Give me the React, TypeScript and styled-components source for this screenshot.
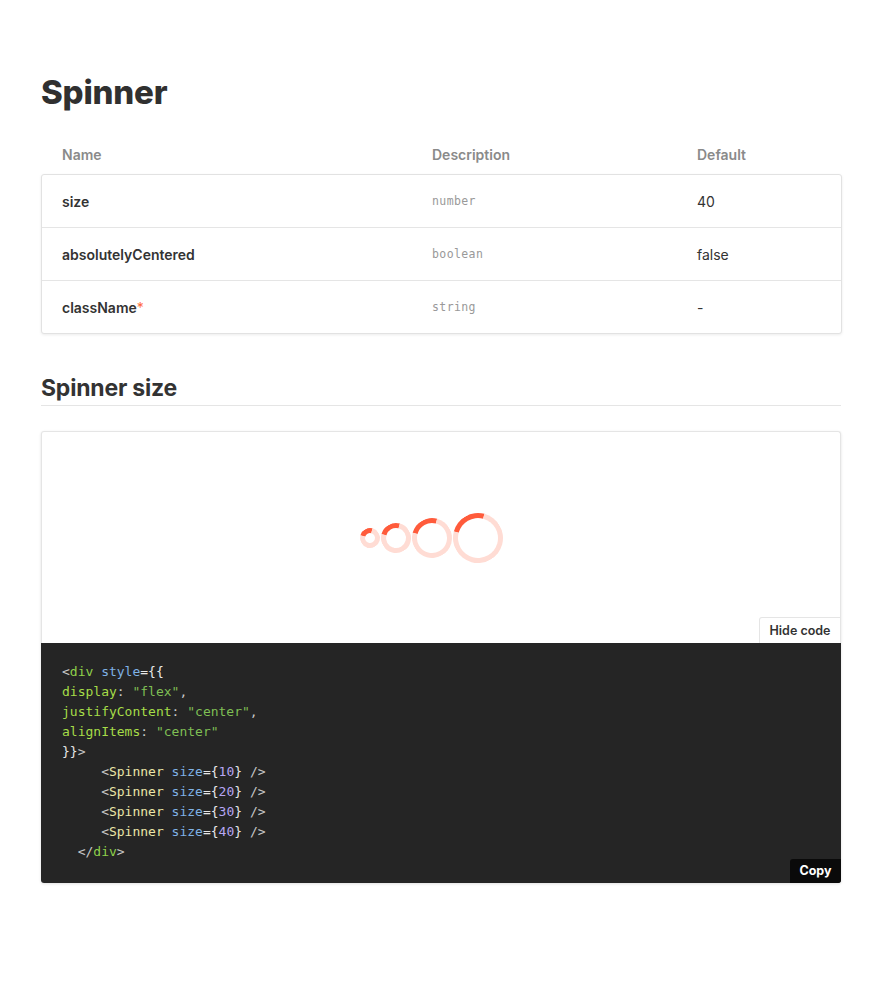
import React from 'react';
import styled, { createGlobalStyle } from 'styled-components';

const GlobalStyle = createGlobalStyle`
  html, body {
    margin: 0;
    padding: 0;
    background: #ffffff;
  }
  body {
    font-family: Inter, "Noto Sans", "Liberation Sans", sans-serif;
    color: #333333;
  }
`;

interface PropRow {
  name: string;
  type: string;
  def: string;
  required?: boolean;
}

const rows: PropRow[] = [
  { name: 'size', type: 'number', def: '40' },
  { name: 'absolutelyCentered', type: 'boolean', def: 'false' },
  { name: 'className', type: 'string', def: '-', required: true },
];

const spinnerSizes = [10, 20, 30, 40];

const App: React.FC = () => {
  return (
    <>
      <GlobalStyle />
      <Page>
        <Title>Spinner</Title>

        <PropsTable>
          <HeaderRow>
            <HeaderCell>Name</HeaderCell>
            <HeaderCell>Description</HeaderCell>
            <HeaderCell>Default</HeaderCell>
          </HeaderRow>
          <TableCard>
            {rows.map((row) => (
              <Row key={row.name}>
                <NameCell>
                  {row.name}
                  {row.required && <Required>*</Required>}
                </NameCell>
                <TypeCell>{row.type}</TypeCell>
                <DefaultCell>{row.def}</DefaultCell>
              </Row>
            ))}
          </TableCard>
        </PropsTable>

        <SectionTitle>Spinner size</SectionTitle>

        <Demo>
          <Preview>
            <SpinnerRow>
              {spinnerSizes.map((s) => (
                <Spinner key={s} $size={s} />
              ))}
            </SpinnerRow>
            <HideCodeTab>Hide code</HideCodeTab>
          </Preview>
          <CodeBlock>
            <Line>
              <P>&lt;</P><Tag>div</Tag> <Attr>style</Attr><W>={'{{'}</W>
            </Line>
            <Line>
              <Key>display</Key><P>: </P><Str>"flex"</Str><P>,</P>
            </Line>
            <Line>
              <Key>justifyContent</Key><P>: </P><Str>"center"</Str><P>,</P>
            </Line>
            <Line>
              <Key>alignItems</Key><P>: </P><Str>"center"</Str>
            </Line>
            <Line>
              <W>{'}}'}</W><P>&gt;</P>
            </Line>
            {spinnerSizes.map((s) => (
              <Line key={s}>
                {'     '}<P>&lt;</P><Comp>Spinner</Comp> <Attr>size</Attr><W>={'{'}</W><Num>{s}</Num><W>{'}'}</W> <P>/&gt;</P>
              </Line>
            ))}
            <Line>
              {'  '}<P>&lt;/</P><Tag>div</Tag><P>&gt;</P>
            </Line>
            <CopyButton>Copy</CopyButton>
          </CodeBlock>
        </Demo>
      </Page>
    </>
  );
};

const Page = styled.div`
  padding: 70px 40px 117px 41px;
`;

const Title = styled.h1`
  font-size: 33px;
  font-weight: 800;
  line-height: 44px;
  margin: 0 0 20px;
  color: #303030;
  letter-spacing: -0.2px;
`;

const PropsTable = styled.div`
  width: 801px;
`;

const columns = `370px 265px 1fr`;

const HeaderRow = styled.div`
  display: grid;
  grid-template-columns: ${columns};
  padding: 0 21px;
  height: 40px;
  align-items: center;
`;

const HeaderCell = styled.div`
  font-size: 14px;
  font-weight: 600;
  color: #8a8a8a;
`;

const TableCard = styled.div`
  border: 1px solid #e2e2e2;
  border-radius: 3px;
  box-shadow: 0 1px 3px rgba(0, 0, 0, 0.08);
  background: #ffffff;
`;

const Row = styled.div`
  display: grid;
  grid-template-columns: ${columns};
  padding: 0 20px;
  height: 52px;
  align-items: center;
  & + & {
    border-top: 1px solid #e5e5e5;
  }
`;

const NameCell = styled.div`
  font-size: 14px;
  font-weight: 600;
  color: #333333;
`;

const Required = styled.span`
  color: #ff6a3d;
  font-weight: 400;
`;

const TypeCell = styled.div`
  font-family: "DejaVu Sans Mono", "Liberation Mono", monospace;
  font-size: 11.5px;
  color: #999999;
  letter-spacing: 0.4px;
`;

const DefaultCell = styled.div`
  font-size: 14px;
  color: #333333;
`;

const SectionTitle = styled.h2`
  font-size: 23px;
  font-weight: 700;
  line-height: 30px;
  margin: 39px 0 25px;
  padding-bottom: 2px;
  border-bottom: 1px solid #e5e5e5;
  color: #333333;
  width: 800px;
  letter-spacing: -0.2px;
`;

const Demo = styled.div`
  width: 800px;
  border-radius: 3px;
  box-shadow: 0 1px 3px rgba(0, 0, 0, 0.12);
`;

const Preview = styled.div`
  position: relative;
  height: 211px;
  border: 1px solid #e5e5e5;
  border-bottom: none;
  border-radius: 3px 3px 0 0;
  display: flex;
  justify-content: center;
  align-items: center;
  padding-right: 20px;
`;

const SpinnerRow = styled.div`
  display: flex;
  align-items: center;
  gap: 1px;
`;

const Spinner = styled.div<{ $size: number }>`
  width: ${({ $size }) => $size}px;
  height: ${({ $size }) => $size}px;
  border: 5px solid #ffdcd4;
  border-top-color: #ff5b3b;
  border-radius: 50%;
  transform: rotate(-30deg);
  flex-shrink: 0;
`;

const HideCodeTab = styled.div`
  position: absolute;
  right: -1px;
  bottom: 0;
  width: 82px;
  height: 26px;
  box-sizing: border-box;
  border: 1px solid #e5e5e5;
  border-bottom: none;
  border-radius: 3px 0 0 0;
  background: #ffffff;
  font-size: 12.5px;
  font-weight: 600;
  color: #333333;
  display: flex;
  align-items: center;
  justify-content: center;
`;

const CodeBlock = styled.pre`
  position: relative;
  margin: 0;
  background: #252525;
  border-radius: 0 0 3px 3px;
  padding: 19px 21px 20px;
  height: 240px;
  box-sizing: border-box;
  font-family: "DejaVu Sans Mono", "Liberation Mono", monospace;
  font-size: 13px;
  line-height: 20px;
  color: #d6d6d6;
`;

const Line = styled.div`
  white-space: pre;
`;

const P = styled.span`
  color: #c8c8c8;
`;

const W = styled.span`
  color: #e8e8e8;
`;

const Tag = styled.span`
  color: #8fd14b;
`;

const Attr = styled.span`
  color: #7fb2e5;
`;

const Key = styled.span`
  color: #a6dd48;
`;

const Str = styled.span`
  color: #7fbf54;
`;

const Comp = styled.span`
  color: #ebe6a8;
`;

const Num = styled.span`
  color: #b7a7f5;
`;

const CopyButton = styled.div`
  position: absolute;
  right: 0;
  bottom: 0;
  width: 51px;
  height: 24px;
  background: #0a0a0a;
  border-radius: 3px 0 3px 0;
  color: #ffffff;
  font-family: Inter, "Liberation Sans", sans-serif;
  font-size: 12.5px;
  font-weight: 700;
  display: flex;
  align-items: center;
  justify-content: center;
`;

export default App;
